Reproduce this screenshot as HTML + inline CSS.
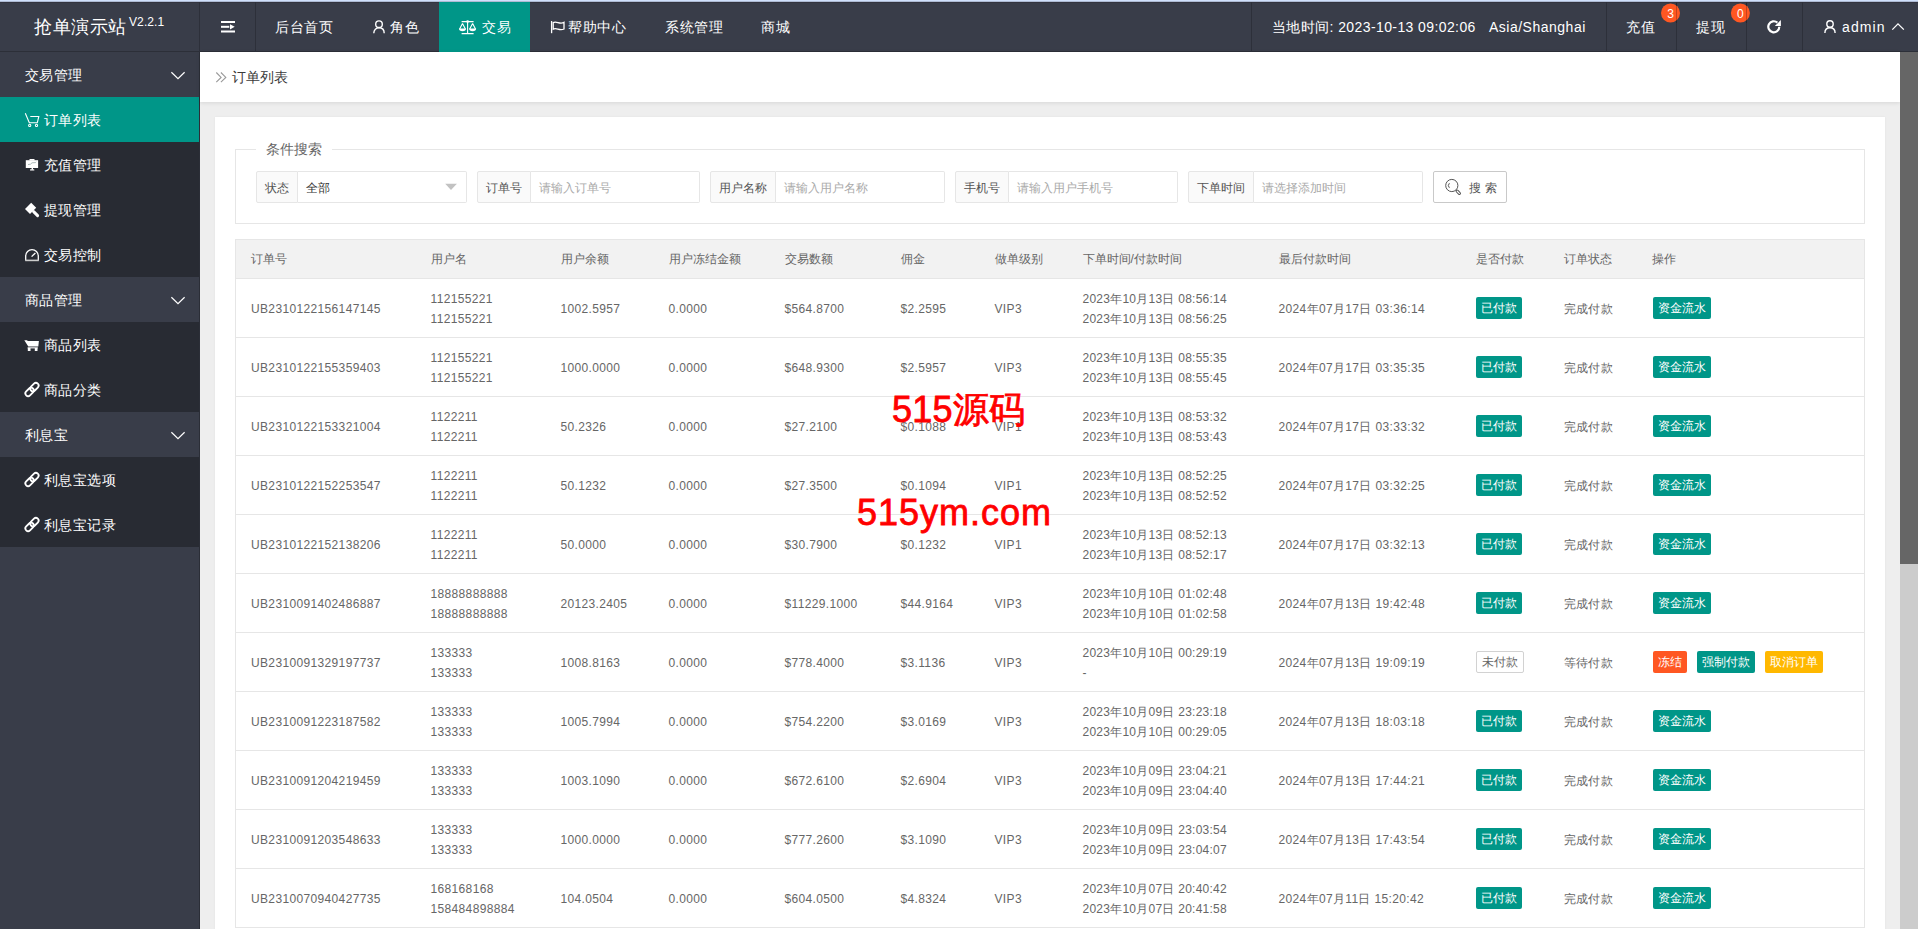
<!DOCTYPE html>
<html><head><meta charset="utf-8">
<style>
*{box-sizing:border-box;margin:0;padding:0}
html,body{width:1918px;height:929px;overflow:hidden;background:#eeeeee;font-family:"Liberation Sans",sans-serif;font-size:12px;color:#666}
.abs{position:absolute}
#topline{left:0;top:0;width:1918px;height:2px;background:#d0e0fc;border-bottom:1px solid #aebbd3}
#header{left:0;top:2px;width:1918px;height:50px;background:#393d49;border-top:1px solid #33343f;border-bottom:1px solid #2c2f38;color:#fff;font-size:14px}
#header .t{position:absolute;top:0;line-height:48px;white-space:nowrap;color:#fff;letter-spacing:0.6px;font-weight:500}
#header .sep{position:absolute;top:-1px;width:1px;height:50px;background:#2d303a}
#active{left:439px;top:2px;width:91px;height:50px;background:#009688}
#side{left:0;top:52px;width:200px;height:877px;background:#393d49;border-right:1px solid #2b2e37}
.ni{position:absolute;left:0;width:199px;height:45px;line-height:45px;color:#fff;font-size:14px;white-space:nowrap;font-weight:500}
.ni.p{background:#393d49}
.ni.c{background:#282b33}
.ni.a{background:#009688}
.ni .tx{position:absolute;left:25px;top:1px;letter-spacing:0.45px}
.ni .ic{position:absolute;left:25px;top:0}
#crumb{left:200px;top:52px;width:1700px;height:50px;background:#fff;box-shadow:0 1px 4px rgba(0,0,0,.1)}
#scroll{left:1900px;top:52px;width:18px;height:877px;background:#cccccc}
#thumb{left:1900px;top:52px;width:18px;height:512px;background:#666666}
#card{left:215px;top:117px;width:1670px;height:900px;background:#fff;box-shadow:0 0 2px rgba(0,0,0,.06)}
#fs{left:235px;top:149px;width:1630px;height:75px;border:1px solid #e6e6e6}
#legend{left:256px;top:139px;padding:0 10px;background:#fff;font-size:14px;color:#666;line-height:20px}
.grp{position:absolute;top:171px;height:32px}
.lab{position:absolute;left:0;top:0;height:32px;line-height:32px;border:1px solid #e6e6e6;border-radius:2px 0 0 2px;background:#fafafa;padding:0 8px;color:#555;font-size:12px;white-space:nowrap}
.inp{position:absolute;top:0;height:32px;width:169px;line-height:32px;border:1px solid #e6e6e6;border-left:none;border-radius:0 2px 2px 0;background:#fff;padding-left:8px;color:#aaa;font-size:12px;white-space:nowrap}
#btn{left:1433px;top:171px;width:74px;height:32px;border:1px solid #c9c9c9;border-radius:2px;background:#fff;color:#555;line-height:30px;font-size:12px}
table{position:absolute;left:235px;top:239px;width:1629px;border-collapse:collapse;table-layout:fixed}
th,td{padding:0 0 0 15px;text-align:left;white-space:nowrap;font-weight:normal;color:#666;font-size:12px;border-top:1px solid #e6e6e6;border-bottom:1px solid #e6e6e6}
th{height:39px;background:#f2f2f2;color:#666;font-weight:500}
td{height:59px;line-height:20px;padding-top:2px;letter-spacing:0.35px}
.bd{letter-spacing:0}
tr td:first-child,tr th:first-child{border-left:1px solid #e6e6e6}
tr td:last-child,tr th:last-child{border-right:1px solid #e6e6e6}
.bd{display:inline-block;position:relative;top:-1px;height:22px;line-height:22px;padding:0 5px;border-radius:2px;background:#009688;color:#fff;font-size:12px}
.bd.w{background:#fff;color:#666;border:1px solid #d2d2d2;line-height:20px;padding:0 5px}
.bd.o{background:#ff5722}
.bd.y{background:#ffb800}
#wm1{left:892px;top:388px;color:#f00;font-size:36px;line-height:44px;white-space:nowrap;-webkit-text-stroke:0.8px #f00;letter-spacing:0.2px}
#wm2{left:857px;top:491px;color:#f00;font-size:36px;line-height:44px;white-space:nowrap;-webkit-text-stroke:0.8px #f00;letter-spacing:1px}
</style></head><body>
<div id="topline" class="abs"></div>
<div id="header" class="abs">
  <div class="t" style="left:34px;top:-5px;font-size:18px">抢单演示站<sup style="font-size:12px;letter-spacing:0.1px;margin-left:2px">V2.2.1</sup></div>
  <div class="sep" style="left:199px"></div>
    <div class="sep" style="left:255px"></div>
  <div class="t" style="left:275px">后台首页</div>
  <div class="t" style="left:390px">角色</div>
  <div class="t" style="left:568px">帮助中心</div>
  <div class="t" style="left:665px">系统管理</div>
  <div class="t" style="left:761px">商城</div>
  <div class="sep" style="left:1251px"></div>
  <div class="t" style="left:1272px;letter-spacing:0.4px">当地时间: 2023-10-13 09:02:06</div>
  <div class="t" style="left:1489px;letter-spacing:0.5px">Asia/Shanghai</div>
  <div class="sep" style="left:1606px"></div>
  <div class="t" style="left:1626px">充值</div>
  <div class="sep" style="left:1676px"></div>
  <div class="t" style="left:1696px">提现</div>
  <div class="sep" style="left:1746px"></div>
  <div class="sep" style="left:1802px"></div>
  <div class="t" style="left:1842px;letter-spacing:1.1px">admin</div>
</div>
<div id="active" class="abs"></div>
<div class="abs" style="left:482px;top:2px;line-height:50px;color:#fff;font-size:14px;letter-spacing:0.6px;font-weight:500">交易</div>

<div id="side" class="abs">
  <div class="ni p" style="top:0">  <span class="tx">交易管理</span></div>
  <div class="ni a" style="top:45px"><span class="tx" style="left:44px">订单列表</span></div>
  <div class="ni c" style="top:90px"><span class="tx" style="left:44px">充值管理</span></div>
  <div class="ni c" style="top:135px"><span class="tx" style="left:44px">提现管理</span></div>
  <div class="ni c" style="top:180px"><span class="tx" style="left:44px">交易控制</span></div>
  <div class="ni p" style="top:225px"><span class="tx">商品管理</span></div>
  <div class="ni c" style="top:270px"><span class="tx" style="left:44px">商品列表</span></div>
  <div class="ni c" style="top:315px"><span class="tx" style="left:44px">商品分类</span></div>
  <div class="ni p" style="top:360px"><span class="tx">利息宝</span></div>
  <div class="ni c" style="top:405px"><span class="tx" style="left:44px">利息宝选项</span></div>
  <div class="ni c" style="top:450px"><span class="tx" style="left:44px">利息宝记录</span></div>
</div>

<div id="crumb" class="abs"><span class="abs" style="left:32px;top:0;line-height:50px;font-size:14px;color:#3a3a3a">订单列表</span></div>
<div id="card" class="abs"></div>
<div id="fs" class="abs"></div>
<div id="legend" class="abs">条件搜索</div>

<div class="grp" style="left:256px"><span class="lab" style="width:42px">状态</span><span class="inp" style="left:42px;color:#333">全部</span></div>
<div class="grp" style="left:477px"><span class="lab" style="width:54px">订单号</span><span class="inp" style="left:54px">请输入订单号</span></div>
<div class="grp" style="left:710px"><span class="lab" style="width:66px">用户名称</span><span class="inp" style="left:66px">请输入用户名称</span></div>
<div class="grp" style="left:955px"><span class="lab" style="width:54px">手机号</span><span class="inp" style="left:54px">请输入用户手机号</span></div>
<div class="grp" style="left:1188px"><span class="lab" style="width:66px">下单时间</span><span class="inp" style="left:66px">请选择添加时间</span></div>
<div id="btn" class="abs"><span class="abs" style="left:35px;top:1px;letter-spacing:0.3px">搜 索</span></div>

<!--TABLE-->
<table id="tbl"><colgroup><col style="width:180px"><col style="width:130px"><col style="width:108px"><col style="width:116px"><col style="width:116px"><col style="width:94px"><col style="width:88px"><col style="width:196px"><col style="width:197px"><col style="width:88px"><col style="width:88px"><col style="width:228px"></colgroup>
<tr><th>订单号</th><th>用户名</th><th>用户余额</th><th>用户冻结金额</th><th>交易数额</th><th>佣金</th><th>做单级别</th><th>下单时间/付款时间</th><th>最后付款时间</th><th>是否付款</th><th>订单状态</th><th>操作</th></tr>
<tr><td>UB2310122156147145</td><td>112155221<br>112155221</td><td>1002.5957</td><td>0.0000</td><td>$564.8700</td><td>$2.2595</td><td>VIP3</td><td style="letter-spacing:0.25px">2023年10月13日 08:56:14<br>2023年10月13日 08:56:25</td><td>2024年07月17日 03:36:14</td><td><span class="bd">已付款</span></td><td>完成付款</td><td style="padding-left:16px"><span class="bd">资金流水</span></td></tr>
<tr><td>UB2310122155359403</td><td>112155221<br>112155221</td><td>1000.0000</td><td>0.0000</td><td>$648.9300</td><td>$2.5957</td><td>VIP3</td><td style="letter-spacing:0.25px">2023年10月13日 08:55:35<br>2023年10月13日 08:55:45</td><td>2024年07月17日 03:35:35</td><td><span class="bd">已付款</span></td><td>完成付款</td><td style="padding-left:16px"><span class="bd">资金流水</span></td></tr>
<tr><td>UB2310122153321004</td><td>1122211<br>1122211</td><td>50.2326</td><td>0.0000</td><td>$27.2100</td><td>$0.1088</td><td>VIP1</td><td style="letter-spacing:0.25px">2023年10月13日 08:53:32<br>2023年10月13日 08:53:43</td><td>2024年07月17日 03:33:32</td><td><span class="bd">已付款</span></td><td>完成付款</td><td style="padding-left:16px"><span class="bd">资金流水</span></td></tr>
<tr><td>UB2310122152253547</td><td>1122211<br>1122211</td><td>50.1232</td><td>0.0000</td><td>$27.3500</td><td>$0.1094</td><td>VIP1</td><td style="letter-spacing:0.25px">2023年10月13日 08:52:25<br>2023年10月13日 08:52:52</td><td>2024年07月17日 03:32:25</td><td><span class="bd">已付款</span></td><td>完成付款</td><td style="padding-left:16px"><span class="bd">资金流水</span></td></tr>
<tr><td>UB2310122152138206</td><td>1122211<br>1122211</td><td>50.0000</td><td>0.0000</td><td>$30.7900</td><td>$0.1232</td><td>VIP1</td><td style="letter-spacing:0.25px">2023年10月13日 08:52:13<br>2023年10月13日 08:52:17</td><td>2024年07月17日 03:32:13</td><td><span class="bd">已付款</span></td><td>完成付款</td><td style="padding-left:16px"><span class="bd">资金流水</span></td></tr>
<tr><td>UB2310091402486887</td><td>18888888888<br>18888888888</td><td>20123.2405</td><td>0.0000</td><td>$11229.1000</td><td>$44.9164</td><td>VIP3</td><td style="letter-spacing:0.25px">2023年10月10日 01:02:48<br>2023年10月10日 01:02:58</td><td>2024年07月13日 19:42:48</td><td><span class="bd">已付款</span></td><td>完成付款</td><td style="padding-left:16px"><span class="bd">资金流水</span></td></tr>
<tr><td>UB2310091329197737</td><td>133333<br>133333</td><td>1008.8163</td><td>0.0000</td><td>$778.4000</td><td>$3.1136</td><td>VIP3</td><td style="letter-spacing:0.25px">2023年10月10日 00:29:19<br>-</td><td>2024年07月13日 19:09:19</td><td><span class="bd w">未付款</span></td><td>等待付款</td><td style="padding-left:16px"><span class="bd o">冻结</span><span class="bd" style="margin-left:10px">强制付款</span><span class="bd y" style="margin-left:10px">取消订单</span></td></tr>
<tr><td>UB2310091223187582</td><td>133333<br>133333</td><td>1005.7994</td><td>0.0000</td><td>$754.2200</td><td>$3.0169</td><td>VIP3</td><td style="letter-spacing:0.25px">2023年10月09日 23:23:18<br>2023年10月10日 00:29:05</td><td>2024年07月13日 18:03:18</td><td><span class="bd">已付款</span></td><td>完成付款</td><td style="padding-left:16px"><span class="bd">资金流水</span></td></tr>
<tr><td>UB2310091204219459</td><td>133333<br>133333</td><td>1003.1090</td><td>0.0000</td><td>$672.6100</td><td>$2.6904</td><td>VIP3</td><td style="letter-spacing:0.25px">2023年10月09日 23:04:21<br>2023年10月09日 23:04:40</td><td>2024年07月13日 17:44:21</td><td><span class="bd">已付款</span></td><td>完成付款</td><td style="padding-left:16px"><span class="bd">资金流水</span></td></tr>
<tr><td>UB2310091203548633</td><td>133333<br>133333</td><td>1000.0000</td><td>0.0000</td><td>$777.2600</td><td>$3.1090</td><td>VIP3</td><td style="letter-spacing:0.25px">2023年10月09日 23:03:54<br>2023年10月09日 23:04:07</td><td>2024年07月13日 17:43:54</td><td><span class="bd">已付款</span></td><td>完成付款</td><td style="padding-left:16px"><span class="bd">资金流水</span></td></tr>
<tr><td>UB2310070940427735</td><td>168168168<br>158484898884</td><td>104.0504</td><td>0.0000</td><td>$604.0500</td><td>$4.8324</td><td>VIP3</td><td style="letter-spacing:0.25px">2023年10月07日 20:40:42<br>2023年10月07日 20:41:58</td><td>2024年07月11日 15:20:42</td><td><span class="bd">已付款</span></td><td>完成付款</td><td style="padding-left:16px"><span class="bd">资金流水</span></td></tr>
</table>
<!--/TABLE-->

<div id="wm1" class="abs">515源码</div>
<div id="wm2" class="abs">515ym.com</div>
<svg class="abs" style="left:0;top:0;z-index:20" width="1918" height="929" viewBox="0 0 1918 929">
<g fill="#fff">
 <rect x="221" y="21" width="14" height="2"/>
 <rect x="221" y="25.8" width="8.3" height="2"/>
 <path d="M230 24.2 L234.7 26.8 L230 29.4Z"/>
 <rect x="221" y="30.5" width="14" height="2"/>
</g>
<g fill="none" stroke="#fff" stroke-width="1.4">
 <circle cx="379" cy="24.2" r="3.3"/>
 <path d="M373.8 33.2 C373.8 29.6 376.2 27.8 379 27.8 C381.8 27.8 384.2 29.6 384.2 33.2"/>
 <circle cx="1830" cy="23.9" r="3.2"/>
 <path d="M1824.9 33 C1824.9 29.5 1827.2 27.8 1830 27.8 C1832.8 27.8 1835.1 29.5 1835.1 33"/>
</g>
<g fill="none" stroke="#fff" stroke-width="1.1">
 <path d="M461.6 21.6H473.6M467.6 21.5V33.6M461.6 33.6H473.6"/>
 <path d="M462.5 23.6 L459.6 29 M462.5 23.6 L465.4 29 M472.6 23.6 L469.7 29 M472.6 23.6 L475.5 29"/>
</g>
<g fill="#fff">
 <circle cx="467.6" cy="21.5" r="1.3"/>
 <path d="M459 28.6 H466 A3.5 2.6 0 0 1 459 28.6Z"/>
 <path d="M469.1 28.6 H476.1 A3.5 2.6 0 0 1 469.1 28.6Z"/>
</g>
<g fill="none" stroke="#fff" stroke-width="1.3">
 <path d="M551.6 21 V33.2"/>
 <path d="M553.2 22.6 C556.5 20.6 559.5 24.8 564 22.4 V29 C559.5 31.4 556.5 27.2 553.2 29.2 Z"/>
</g>
<g fill="none" stroke="#fff" stroke-width="2.2">
 <path d="M1779.3 26.8 A5.5 5.5 0 1 1 1777.4 22.6"/>
</g>
<path fill="#fff" d="M1780.9 20 V26 H1774.8 Z"/>
<path fill="none" stroke="#fff" stroke-width="1.3" d="M1892.3 29.6 L1898 23.8 L1903.8 29.6"/>
<g fill="#ff5722">
 <circle cx="1670.5" cy="13" r="9.5"/>
 <circle cx="1740.4" cy="13" r="9.5"/>
</g>
<path stroke="rgba(0,0,0,0.22)" stroke-width="1" d="M1676.5 3 V23 M1746.5 3 V23"/>
<g fill="#fff" font-family="Liberation Sans, sans-serif" font-size="12" text-anchor="middle">
 <text x="1670.5" y="17.5">3</text>
 <text x="1740.4" y="17.5">0</text>
</g>
<g fill="none" stroke="#fff" stroke-width="1.2">
 <path d="M171.4 72.3 L178 78.7 L184.6 72.3"/>
 <path d="M171.4 297.3 L178 303.7 L184.6 297.3"/>
 <path d="M171.4 432.3 L178 438.7 L184.6 432.3"/>
</g>
<g fill="none" stroke="#fff" stroke-width="1.1">
 <path d="M25.3 113.2 L29.3 122.8 H37.3 L38.8 116.5 H30.3"/>
 <circle cx="29.7" cy="125.4" r="1.1"/>
 <circle cx="36.5" cy="125.4" r="1.1"/>
</g>
<g fill="#fff">
 <rect x="25.8" y="160.2" width="12.3" height="7.8"/>
 <rect x="29.5" y="159" width="5" height="1.6"/>
 <rect x="31.6" y="168" width="1.4" height="1.6"/>
 <rect x="30" y="169.3" width="4.4" height="1.2" rx="0.6"/>
</g>
<path fill="none" stroke="#9aa" stroke-width="0.8" d="M28 164.6 L30.5 164.2 L32 162.8 L35.5 162.6 L36.2 161.8"/>
<g fill="#fff">
 <path d="M25 209 L31.2 202.8 L36.2 207.8 L30 214 Z"/>
</g>
<path stroke="#fff" stroke-width="3" stroke-linecap="round" d="M33.6 211.6 L37.6 215.6"/>
<g fill="none" stroke="#fff" stroke-width="1.3">
 <path d="M25.7 260.5 V256 A6.3 6.3 0 0 1 38.3 256 V260.5"/>
 <path d="M31.6 256.6 L35.4 253"/>
</g>
<rect x="25.2" y="259.6" width="13.6" height="1.6" fill="#ccc"/>
<g fill="#fff">
 <path d="M24.3 340.2 H27.2 L27.6 341 H38.9 L38.3 346.4 H28.3 Z"/>
 <rect x="27.6" y="347.3" width="10.2" height="1.1"/>
 <rect x="27.8" y="348" width="2.7" height="3"/>
 <rect x="34.8" y="348" width="2.7" height="3"/>
</g>
<g fill="none" stroke="#fff" stroke-width="1.8">
 <g transform="translate(32,389.5) rotate(-45)"><rect x="-8.2" y="-2.7" width="9.6" height="5.4" rx="2.7"/><rect x="-1.4" y="-2.7" width="9.6" height="5.4" rx="2.7"/></g>
 <g transform="translate(32,479.5) rotate(-45)"><rect x="-8.2" y="-2.7" width="9.6" height="5.4" rx="2.7"/><rect x="-1.4" y="-2.7" width="9.6" height="5.4" rx="2.7"/></g>
 <g transform="translate(32,524.5) rotate(-45)"><rect x="-8.2" y="-2.7" width="9.6" height="5.4" rx="2.7"/><rect x="-1.4" y="-2.7" width="9.6" height="5.4" rx="2.7"/></g>
</g>
<path fill="none" stroke="#999" stroke-width="1.1" d="M216.3 72.5 L221.1 77.4 L216.3 82.2 M220.9 72.5 L225.8 77.4 L220.9 82.2"/>
<path fill="#c2c2c2" d="M445.2 183.7 H456.9 L451 190 Z"/>
<g fill="none" stroke="#555" stroke-width="1">
 <circle cx="1451.8" cy="185.5" r="6.1"/>
 <path d="M1449.4 183.2 A3.3 3.3 0 0 0 1449.4 187.8"/>
 <g transform="translate(1458.3,192.3) rotate(45)"><rect x="-2.6" y="-1.1" width="5.2" height="2.2" rx="1.1"/></g>
</g>
</svg>
<div id="scroll" class="abs"></div>
<div id="thumb" class="abs"></div>
</body></html>
